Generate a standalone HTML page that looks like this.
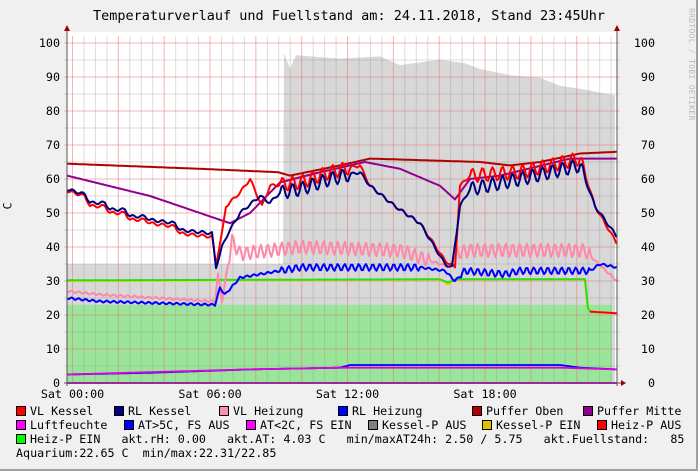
<!DOCTYPE html>
<html><head><meta charset="utf-8"><style>
body{margin:0;width:698px;height:471px;overflow:hidden;background:#f0f0f0;font-family:"DejaVu Sans Mono","Liberation Mono",monospace;}
#wrap{position:relative;width:696px;height:469px;border-right:2px solid #a0a0a0;border-bottom:2px solid #a0a0a0;}
.t{position:absolute;font-size:11.7px;color:#000;white-space:pre;line-height:14px;}
.b{position:absolute;width:8px;height:8px;border:1px solid #000;}
</style></head><body><div id="wrap">
<div class="t" style="left:0;width:698px;top:9px;text-align:center;font-size:13.5px;">Temperaturverlauf und Fuellstand am: 24.11.2018, Stand 23:45Uhr</div>
<div class="t" style="left:684px;top:8px;font-size:8px;color:#bbb;writing-mode:vertical-rl;letter-spacing:0.3px;">RRDTOOL / TOBI OETIKER</div>
<svg id="g" width="698" height="471" style="position:absolute;left:0;top:0"></svg>
<div class="t" style="left:4px;top:199px;transform:rotate(-90deg);">C</div>
<div class="b" style="left:16px;top:406px;background:#f00"></div><div class="t" style="left:30px;top:404px">VL Kessel</div>
<div class="b" style="left:114px;top:406px;background:#000080"></div><div class="t" style="left:128px;top:404px">RL Kessel</div>
<div class="b" style="left:219px;top:406px;background:#ff8fa8"></div><div class="t" style="left:233px;top:404px">VL Heizung</div>
<div class="b" style="left:338px;top:406px;background:#00f"></div><div class="t" style="left:352px;top:404px">RL Heizung</div>
<div class="b" style="left:472px;top:406px;background:#b00000"></div><div class="t" style="left:486px;top:404px">Puffer Oben</div>
<div class="b" style="left:583px;top:406px;background:#900090"></div><div class="t" style="left:597px;top:404px">Puffer Mitte</div>
<div class="b" style="left:16px;top:420px;background:#f0f"></div><div class="t" style="left:30px;top:418px">Luftfeuchte</div>
<div class="b" style="left:124px;top:420px;background:#00f"></div><div class="t" style="left:138px;top:418px">AT&gt;5C, FS AUS</div>
<div class="b" style="left:246px;top:420px;background:#f0f"></div><div class="t" style="left:260px;top:418px">AT&lt;2C, FS EIN</div>
<div class="b" style="left:368px;top:420px;background:#808080"></div><div class="t" style="left:382px;top:418px">Kessel-P AUS</div>
<div class="b" style="left:482px;top:420px;background:#e0c000"></div><div class="t" style="left:496px;top:418px">Kessel-P EIN</div>
<div class="b" style="left:597px;top:420px;background:#f00"></div><div class="t" style="left:611px;top:418px">Heiz-P AUS</div>
<div class="b" style="left:16px;top:434px;background:#0f0"></div><div class="t" style="left:30px;top:432px">Heiz-P EIN   akt.rH: 0.00   akt.AT: 4.03 C   min/maxAT24h: 2.50 / 5.75   akt.Fuellstand:   85</div>
<div class="t" style="left:16px;top:446px">Aquarium:22.65 C  min/max:22.31/22.85</div>
</div>
<script>
var g=document.getElementById('g'),s='';
function Y(v){return 383-v*3.4;}
s+='<rect x="67" y="32" width="550" height="351" fill="#fff"/>';
// grey area
var gr=[[67,35],[283,35],[284,97],[290,92],[296,96],[340,95],[380,96],[400,94],[440,95],[465,94],[480,92],[510,90],[540,90],[560,87],[580,86],[615,85]];
var p='67,383 ';gr.forEach(function(a){p+=a[0]+','+Y(a[1]+(a[0]>284?Math.sin(a[0])*0.6:0))+' ';});
for(var x=284;x<615;x+=4){}
p+='615,383';s+='<polygon points="'+p+'" fill="#d8d8d8"/>';
s+='<rect x="67" y="'+Y(23)+'" width="545" height="'+(23*3.4)+'" fill="#9be59b"/>';
// grid
for(var i=0;i<48;i++){var x=72.5+i*11.46;if(x>617)break;var maj=i%4==0;s+='<line x1="'+x+'" y1="36" x2="'+x+'" y2="383" stroke="'+(maj?'rgba(230,120,120,0.55)':'rgba(140,140,140,0.3)')+'" stroke-width="1"/>';}
for(var v=0;v<=100;v+=5){var y=Y(v);s+='<line x1="64" y1="'+y+'" x2="620" y2="'+y+'" stroke="'+(v%10==0?'rgba(230,120,120,0.55)':'rgba(140,140,140,0.3)')+'"/>';
if(v%10==0){s+='<text x="60" y="'+(y+4)+'" text-anchor="end" font-size="11.7" font-family="DejaVu Sans Mono,monospace">'+v+'</text><text x="655" y="'+(y+4)+'" text-anchor="end" font-size="11.7" font-family="DejaVu Sans Mono,monospace">'+v+'</text>';}}
function L(pts,col,w,osc,per){var o='';for(var k=0;k<pts.length-1;k++){var a=pts[k],b=pts[k+1];for(var x=a[0];x<b[0];x+=1.5){var v=a[1]+(b[1]-a[1])*(x-a[0])/(b[0]-a[0]);var amp=osc?osc(x):0;v+=amp*Math.sin(x*2*Math.PI/(per||8));o+=x.toFixed(1)+','+Y(v).toFixed(1)+' ';}}
var e=pts[pts.length-1];o+=e[0]+','+Y(e[1]);s+='<polyline points="'+o+'" fill="none" stroke="'+col+'" stroke-width="'+w+'" stroke-linejoin="round"/>';}
L([[67,0],[617,0]],'#e000e0',2);
L([[67,2.5],[150,3],[250,4],[340,4.5],[350,5.3],[560,5.3],[580,4.5],[617,4]],'#0000ff',1.8);
L([[67,2.5],[150,3.2],[250,4],[340,4.5],[560,4.5],[617,4]],'#e000e0',1.8);
L([[67,30],[440,30.5],[448,29],[456,30.5],[585,30.5],[588,22],[590,21]],'#ffd000',2.4);
L([[67,30.2],[440,30.5],[448,29.5],[456,30.5],[585,30.5],[588,22],[590,21]],'#20e020',2);
L([[590,21],[617,20.5]],'#f00',2);
var hz=function(x){return (x>228&&x<430)||(x>455&&x<590)?2:0.3;};
L([[67,27],[100,26],[215,24],[218,32],[222,24],[232,42],[240,38],[300,40],[400,39],[430,36],[450,34],[455,38],[470,39],[585,39],[595,36],[617,30]],'#ff88aa',2,hz,7);
var rz=function(x){return (x>280&&x<420)||(x>460&&x<590)?1:0.3;};
L([[67,25],[100,24],[215,23],[220,28],[225,26],[240,31],[280,33],[300,34],[420,34],[445,33],[455,30],[465,33],[505,32],[520,33],[590,33],[600,35],[617,34]],'#0000ff',2,rz,7);
L([[67,64.5],[200,63],[278,62],[290,61],[340,64],[370,66],[480,65],[510,64],[540,65],[580,67.5],[617,68]],'#b00000',2);
L([[67,61],[150,55],[230,47],[250,50],[280,59],[320,62],[365,65],[400,63],[440,58],[455,54],[470,60],[500,61],[570,66],[617,66]],'#900090',2);
var kz=function(x){return (x>280&&x<350)||(x>470&&x<585)?2:0.4;};
L([[67,56.5],[85,55],[90,52],[105,52],[110,50],[125,50],[130,48],[145,48],[150,47],[175,46],[180,44],[212,43],[216,35],[222,44],[226,52],[240,56],[250,60],[262,52],[270,58],[300,59],[330,62],[360,64],[370,58],[395,52],[420,47],[445,36],[455,34],[460,58],[470,61],[520,62],[580,66],[595,52],[617,41]],'#ff0000',2,kz,10);
L([[67,57],[85,55.5],[90,53],[105,53],[110,51],[125,51],[130,49],[145,49],[150,48],[175,47],[180,45],[212,44],[216,34],[222,40],[228,44],[240,50],[260,55],[270,53],[280,56],[300,57],[330,60],[360,62],[370,58],[395,52],[420,47],[445,35],[452,34],[460,52],[470,57],[520,60],[580,64],[595,52],[617,43]],'#000080',2,kz,10);
s+='<line x1="67" y1="30" x2="67" y2="386" stroke="#555"/><line x1="617" y1="30" x2="617" y2="386" stroke="#555"/><line x1="64" y1="383" x2="622" y2="383" stroke="#555"/>';
s+='<polygon points="64,31 70,31 67,25" fill="#a00000"/><polygon points="614,31 620,31 617,25" fill="#a00000"/><polygon points="621,380 621,386 626,383" fill="#a00000"/>';
[['Sat 00:00',72.5],['Sat 06:00',210],['Sat 12:00',347.5],['Sat 18:00',485]].forEach(function(a){s+='<text x="'+a[1]+'" y="398" text-anchor="middle" font-size="11.7" font-family="DejaVu Sans Mono,monospace">'+a[0]+'</text>';});
g.innerHTML=s;
</script>
</body></html>
